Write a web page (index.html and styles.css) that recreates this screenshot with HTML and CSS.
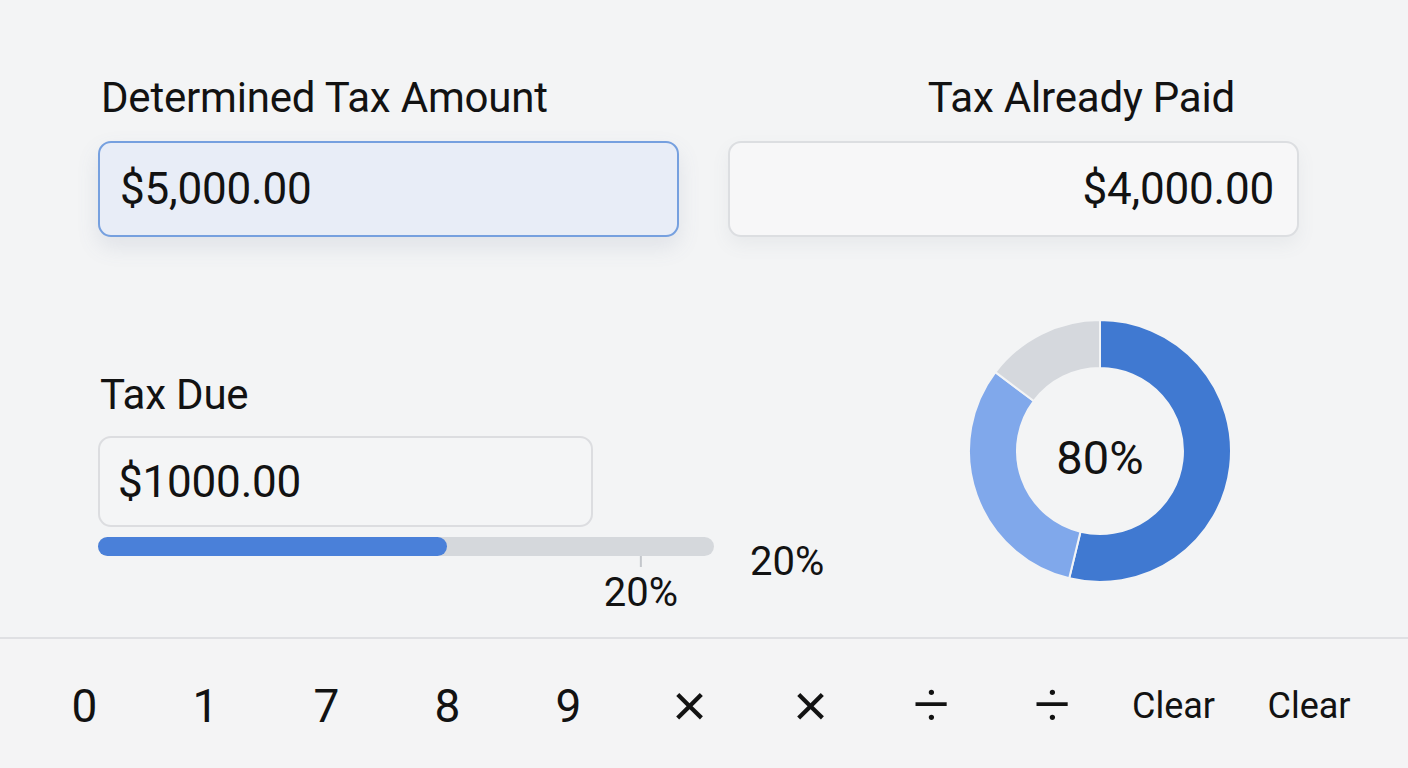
FILE: index.html
```html
<!DOCTYPE html>
<html lang="en">
<head>
<meta charset="utf-8">
<title>Tax Calculator</title>
<link rel="stylesheet" href="styles.css">
</head>
<body>
<main class="main">
  <section class="top-row">
    <div class="field">
      <div class="label">Determined Tax Amount</div>
      <div class="input input-active">$5,000.00</div>
    </div>
    <div class="field">
      <div class="label label-right">Tax Already Paid</div>
      <div class="input input-paid">$4,000.00</div>
    </div>
  </section>
  <section class="bottom-row">
    <div class="due-col">
      <div class="label">Tax Due</div>
      <div class="input input-due">$1000.00</div>
      <div class="progress-row">
        <div class="bar">
          <div class="bar-fill" style="width:56.6%"></div>
          <div class="marker">
            <div class="tick"></div>
            <div class="marker-label">20%</div>
          </div>
        </div>
        <div class="bar-pct">20%</div>
      </div>
    </div>
    <div class="donut">
      <svg class="donut-svg" width="262" height="262" viewBox="0 0 262 262">
        <path class="seg seg-dark" d="M131 0 A131 131 0 1 1 100.20 258.33 L111.49 211.68 A83 83 0 1 0 131 48 Z"/>
        <path class="seg seg-light" d="M100.20 258.33 A131 131 0 0 1 26.38 52.16 L64.72 81.05 A83 83 0 0 0 111.49 211.68 Z"/>
        <path class="seg seg-gray" d="M26.38 52.16 A131 131 0 0 1 131 0 L131 48 A83 83 0 0 0 64.72 81.05 Z"/>
      </svg>
      <div class="donut-text">80%</div>
    </div>
  </section>
</main>
<footer class="keypad">
  <span class="key">0</span>
  <span class="key">1</span>
  <span class="key">7</span>
  <span class="key">8</span>
  <span class="key">9</span>
  <span class="key key-times">×</span>
  <span class="key key-times">×</span>
  <span class="key key-div">÷</span>
  <span class="key key-div">÷</span>
  <span class="key key-word">Clear</span>
  <span class="key key-word key-last">Clear</span>
</footer>
</body>
</html>
```
FILE: styles.css
```css
* { box-sizing: border-box; }
html, body {
  margin: 0;
  padding: 0;
}
body {
  width: 1408px;
  height: 768px;
  overflow: hidden;
  background: #f3f4f5;
  color: #121212;
  font-family: Roboto, "Liberation Sans", sans-serif;
}
.main {
  height: 637px;
  padding: 74px 0 0 98px;
}
.top-row {
  display: grid;
  grid-template-columns: 581px 571px;
  column-gap: 49px;
}
.field {
  display: flex;
  flex-direction: column;
  gap: 19px;
}
.label {
  font-size: 42px;
  line-height: 48px;
  letter-spacing: -0.2px;
  padding-left: 3px;
}
.label-right {
  text-align: right;
  padding-right: 64px;
}
.input {
  height: 96px;
  border-radius: 13px;
  font-size: 44px;
  display: flex;
  align-items: center;
  padding: 0 20px;
  letter-spacing: -0.2px;
}
.input-active {
  background: #e8edf7;
  border: 2px solid #76a0df;
  box-shadow: 0 10px 22px rgba(90, 110, 150, 0.13);
}
.input-paid {
  background: #f7f7f8;
  border: 2px solid #dcdee1;
  justify-content: flex-end;
  padding-right: 23px;
  box-shadow: 0 8px 18px rgba(100, 110, 130, 0.08);
}
.bottom-row {
  display: flex;
  margin-top: 83px;
  gap: 143px;
}
.due-col {
  width: 728px;
  padding-top: 51px;
}
.due-col .label {
  padding-left: 2px;
}
.input-due {
  margin-top: 17px;
  width: 495px;
  height: 91px;
  background: #f4f5f6;
  border: 2px solid #dcdde0;
  padding-left: 18px;
}
.progress-row {
  display: flex;
  align-items: flex-start;
  gap: 36px;
  margin-top: 10px;
}
.bar {
  position: relative;
  width: 616px;
  height: 19px;
  border-radius: 10px;
  background: #d5d8dc;
}
.bar-fill {
  height: 100%;
  border-radius: 10px;
  background: #4a80d9;
}
.marker {
  position: absolute;
  left: 543px;
  top: 19px;
  display: flex;
  flex-direction: column;
  align-items: center;
  transform: translateX(-50%);
}
.tick {
  width: 2px;
  height: 11px;
  background: #c4c7cc;
}
.marker-label {
  font-size: 40px;
  line-height: 44px;
  margin-top: 4px;
}
.bar-pct {
  font-size: 40px;
  line-height: 48px;
  margin-top: 1px;
}
.donut {
  display: grid;
  width: 262px;
  height: 262px;
  place-items: center;
}
.donut-svg,
.donut-text {
  grid-area: 1 / 1;
}
.seg {
  stroke: #f3f4f5;
  stroke-width: 2;
  stroke-linejoin: round;
}
.seg-dark { fill: #4079d1; }
.seg-light { fill: #80a8eb; }
.seg-gray { fill: #d5d8dd; }
.donut-text {
  font-size: 47px;
  line-height: 54px;
  margin-top: 14px;
}
.keypad {
  height: 131px;
  border-top: 2px solid #dfe0e3;
  background: #f4f4f5;
  display: flex;
  align-items: center;
  padding: 5px 0 0 24px;
}
.key {
  width: 121px;
  text-align: center;
  font-size: 46px;
  line-height: 56px;
}
.key-times {
  font-family: "Liberation Sans", sans-serif;
  font-size: 60px;
}
.key-div {
  font-size: 64px;
  font-weight: 300;
}
.key-word {
  font-size: 36px;
}
.key-last {
  width: 150px;
}
```
